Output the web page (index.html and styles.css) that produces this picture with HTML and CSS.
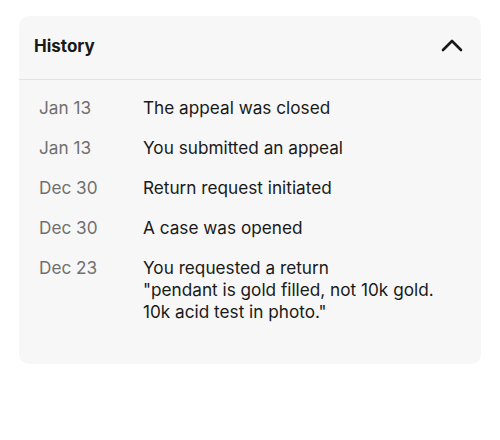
FILE: index.html
```html
<!DOCTYPE html>
<html>
<head>
<meta charset="utf-8">
<link rel="stylesheet" href="styles.css">
</head>
<body>
<section class="card">
  <header class="card-header">
    <h2 class="title">History</h2>
    <svg class="chevron" width="22" height="14" viewBox="0 0 22 14" aria-hidden="true">
      <path d="M2 12 L11 3 L20 12" fill="none" stroke="#191919" stroke-width="2.6" stroke-linecap="round" stroke-linejoin="round"/>
    </svg>
  </header>
  <ul class="events">
    <li class="event"><span class="date">Jan 13</span><span class="desc">The appeal was closed</span></li>
    <li class="event"><span class="date">Jan 13</span><span class="desc">You submitted an appeal</span></li>
    <li class="event"><span class="date">Dec 30</span><span class="desc">Return request initiated</span></li>
    <li class="event"><span class="date">Dec 30</span><span class="desc">A case was opened</span></li>
    <li class="event"><span class="date">Dec 23</span><span class="desc">You requested a return<br>"pendant is gold filled, not 10k gold.<br>10k acid test in photo."</span></li>
  </ul>
</section>
</body>
</html>
```

FILE: styles.css
```css
* { box-sizing: border-box; }
html, body { margin: 0; padding: 0; background: #ffffff; }
body {
  font-family: Inter, "Noto Sans", "Liberation Sans", sans-serif;
  color: #191919;
  padding: 16px 19px 0 19px;
}
.card {
  background: #f7f7f7;
  border-radius: 10px;
  height: 348px;
}
.card-header {
  height: 64px;
  display: flex;
  align-items: center;
  justify-content: space-between;
  padding: 0 18px 4px 15px;
  border-bottom: 1px solid #e2e2e2;
}
.title {
  margin: 0;
  font-size: 17px;
  font-weight: 700;
}
.chevron { display: block; margin-top: -2px; }
.events {
  list-style: none;
  margin: 0;
  padding: 17px 20px 0 20px;
  display: flex;
  flex-direction: column;
  gap: 18px;
}
.event {
  display: grid;
  grid-template-columns: 104px 1fr;
  font-size: 17.2px;
  line-height: 22px;
}
.date { color: #707070; }
.desc { color: #191919; }
```
